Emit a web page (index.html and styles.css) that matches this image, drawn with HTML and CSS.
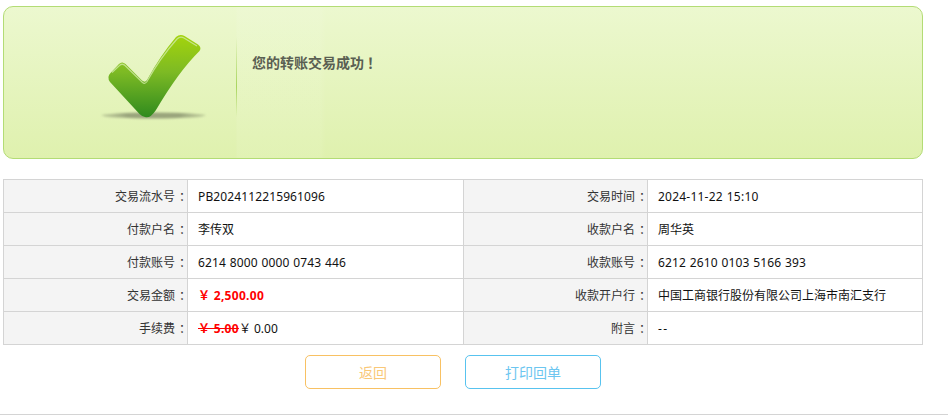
FILE: index.html
```html
<!DOCTYPE html>
<html lang="zh-CN">
<head>
<meta charset="utf-8">
<title>转账结果</title>
<link rel="stylesheet" href="styles.css">
</head>
<body>
<main class="page">
  <section class="banner">
    <svg class="check" width="120" height="100" viewBox="0 0 120 100" aria-hidden="true">
      <defs>
        <linearGradient id="checkFill" x1="0" y1="0" x2="0" y2="1">
          <stop offset="0" stop-color="#a4d40c"/>
          <stop offset="0.45" stop-color="#7dba24"/>
          <stop offset="1" stop-color="#2f8a1e"/>
        </linearGradient>
        <linearGradient id="shadowFill" x1="0" y1="0" x2="1" y2="0">
          <stop offset="0" stop-color="#8d9772" stop-opacity=".35"/>
          <stop offset="0.25" stop-color="#8d9772" stop-opacity=".85"/>
          <stop offset="0.75" stop-color="#8d9772" stop-opacity=".85"/>
          <stop offset="1" stop-color="#8d9772" stop-opacity=".35"/>
        </linearGradient>
        <filter id="soft" x="-10%" y="-100%" width="120%" height="300%">
          <feGaussianBlur stdDeviation="1.300"/>
        </filter>
      </defs>
      <ellipse cx="53.500" cy="83.500" rx="52" ry="3" fill="url(#shadowFill)" filter="url(#soft)"/>
      <path d="M10.500 41 L19 32 Q22 29 25.500 32 L42 48.500 Q45 51 47 48 Q60 24 76 5 Q80 1.500 84.500 4 L98 12.500 Q102 15.500 99.500 19 Q79 39 56 78 Q50 87 45 85 Q42 84.500 39.500 82 L10 50 Q6.500 45 10.500 41 Z" fill="url(#checkFill)"/>
      <path d="M12 40.500 L19.500 33.500 Q22 31 25 33.500 L42.500 50.500 Q45 52.500 47 49.500 Q60 26 77 7 Q80 4 84 6 L97 14" fill="none" stroke="#d0eaa4" stroke-width="1.200" opacity=".8"/>
    </svg>
    <div class="divider"></div>
    <p class="message">您的转账交易成功<span class="bang">！</span></p>
  </section>

  <table class="detail">
    <colgroup>
      <col class="col-label"><col class="col-value-a"><col class="col-label"><col class="col-value-b">
    </colgroup>
    <tbody>
      <tr>
        <th>交易流水号<span class="colon">：</span></th><td><span class="num">PB2024112215961096</span></td>
        <th>交易时间<span class="colon">：</span></th><td><span class="num-date">2024-11-22 15:10</span></td>
      </tr>
      <tr>
        <th>付款户名<span class="colon">：</span></th><td>李传双</td>
        <th>收款户名<span class="colon">：</span></th><td>周华英</td>
      </tr>
      <tr>
        <th>付款账号<span class="colon">：</span></th><td><span class="num">6214 8000 0000 0743 446</span></td>
        <th>收款账号<span class="colon">：</span></th><td><span class="num">6212 2610 0103 5166 393</span></td>
      </tr>
      <tr>
        <th>交易金额<span class="colon">：</span></th><td><strong class="money">￥ 2,500.00</strong></td>
        <th>收款开户行<span class="colon">：</span></th><td>中国工商银行股份有限公司上海市南汇支行</td>
      </tr>
      <tr>
        <th>手续费<span class="colon">：</span></th><td><del class="money">￥ 5.00</del>￥ 0.00</td>
        <th>附言<span class="colon">：</span></th><td><span class="dash">--</span></td>
      </tr>
    </tbody>
  </table>

  <div class="actions">
    <button class="btn btn-back" type="button">返回</button>
    <button class="btn btn-print" type="button">打印回单</button>
  </div>
</main>
<hr class="rule">
</body>
</html>
```
FILE: styles.css
```css
* { box-sizing: border-box; }

html, body {
  margin: 0;
  background: #fff;
}

body {
  font-family: "Noto Sans", "Noto Sans CJK SC", sans-serif;
  font-size: 12px;
  color: #222;
}

.page {
  width: 920px;
  margin-left: 3px;
  padding-top: 6px;
}

.banner {
  display: flex;
  align-items: flex-start;
  height: 153px;
  border: 1px solid #b3dc75;
  border-radius: 10px;
  background:
    linear-gradient(90deg, rgba(255,255,255,0) 232px, rgba(255,255,255,.07) 233px, rgba(255,255,255,.07) 316px, rgba(255,255,255,0) 322px),
    linear-gradient(180deg, #ecf8cf 0%, #dff1ae 100%);
}

.check {
  flex: none;
  margin: 25px 0 0 96px;
}

.divider {
  flex: none;
  width: 1px;
  height: 80px;
  margin: 30px 0 0 16px;
  background: linear-gradient(180deg, rgba(169,213,95,0) 0%, #a9d55f 62%, rgba(169,213,95,0) 100%);
}

.message {
  margin: 48px 0 0 15px;
  font-size: 14px;
  line-height: 16px;
  font-weight: 700;
  color: #5a5f52;
}

.bang {
  display: inline-block;
  width: 14px;
  text-indent: 3px;
}

.colon {
  display: inline-block;
  width: 12px;
  text-indent: 4px;
}

.detail {
  width: 919px;
  height: 166px;
  margin-top: 20px;
  border-collapse: collapse;
  table-layout: fixed;
}

.col-label { width: 184px; }
.col-value-a { width: 276px; }
.col-value-b { width: 275px; }

.detail th,
.detail td {
  height: 33px;
  padding: 1px 0 0;
  border: 1px solid #d4d4d4;
  font-size: 12px;
  line-height: 16px;
  font-weight: 400;
}

.detail th {
  background: #f4f4f4;
  text-align: right;
  color: #333;
}

.detail td {
  padding-left: 10px;
  text-align: left;
  color: #111;
}

.num {
  letter-spacing: .12px;
  word-spacing: .6px;
}

.num-date {
  letter-spacing: .22px;
  word-spacing: .6px;
}

.dash {
  letter-spacing: 1.500px;
}

.money {
  font-weight: 700;
  color: #f00;
  letter-spacing: .3px;
}

.actions {
  display: flex;
  gap: 24px;
  margin: 10px 0 0 302px;
}

.btn {
  width: 136px;
  height: 34px;
  padding: 0;
  border: 1px solid;
  border-radius: 5px;
  background: #fff;
  font: inherit;
  font-size: 14px;
}

.btn-back {
  border-color: #f8c163;
  color: #f9c878;
}

.btn-print {
  border-color: #58c3ef;
  color: #6cc6f0;
}

.rule {
  height: 1px;
  margin: 25px 0 0;
  border: 0;
  background: #d4d4d4;
}
```
